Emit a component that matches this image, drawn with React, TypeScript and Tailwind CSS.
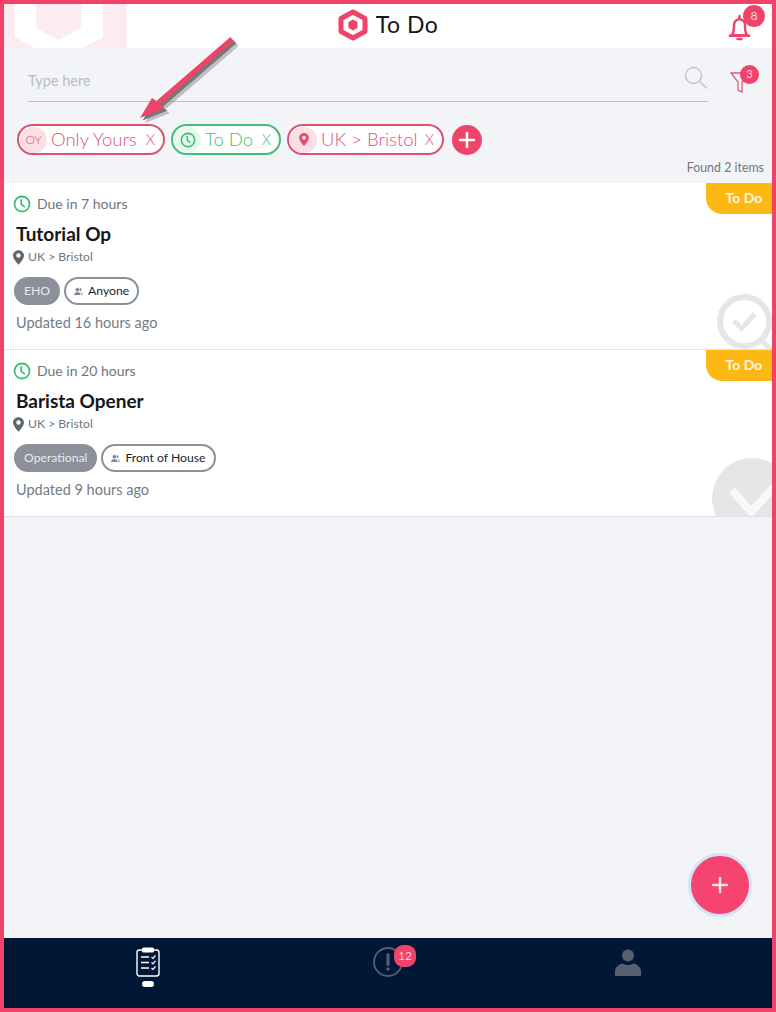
import { Plus, Users } from "lucide-react";

const font = { fontFamily: "Lato, 'Noto Sans', sans-serif" };

function Clock({ className }: { className: string }) {
  return (
    <svg viewBox="0 0 24 24" fill="none" stroke="currentColor" strokeWidth="2.4" strokeLinecap="round" strokeLinejoin="round" className={className}>
      <circle cx="12" cy="12" r="10" />
      <path d="M11 6.5v6l4 3" />
    </svg>
  );
}

function Pin({ className }: { className: string }) {
  return (
    <svg viewBox="0 0 24 32" className={className}>
      <path fill="currentColor" fillRule="evenodd" d="M12 0C5.4 0 0 5.3 0 11.8 0 20 12 32 12 32s12-12 12-20.2C24 5.3 18.6 0 12 0zm0 16.5a4.8 4.8 0 1 1 0-9.6 4.8 4.8 0 0 1 0 9.6z" />
    </svg>
  );
}

function Chip({ color, tint, icon, label, width }: { color: string; tint: string; icon: React.ReactNode; label: string; width: string }) {
  return (
    <div className={`flex h-[31px] items-center rounded-full border-2 bg-white ${color} ${width}`}>
      <span className={`ml-[1px] flex h-[26px] w-[27px] shrink-0 items-center justify-center rounded-full ${tint}`}>{icon}</span>
      <span className="ml-[4px] text-[18.5px] font-light whitespace-nowrap">{label}</span>
      <span className="mr-[8px] ml-auto text-[15px] font-light">X</span>
    </div>
  );
}

function Card({ due, title, tag, who, updated, mark }: { due: string; title: string; tag: string; who: string; updated: string; mark: React.ReactNode }) {
  return (
    <div className="relative h-[167px] shrink-0 overflow-hidden border-b border-[#e2e3e6] bg-white pt-[12px] pl-[10px]">
      <div className="absolute top-0 right-0 flex h-[31px] w-[66px] items-center justify-center rounded-bl-[16px] bg-[#fdb813] pb-[3px] pl-[10px] text-[14px] font-bold text-[#fff6e0]">
        To Do
      </div>
      {mark}
      <div className="flex h-[17px] items-center">
        <Clock className="ml-[-1px] h-[18px] w-[18px] text-[#3dbf75]" />
        <span className="ml-[6px] text-[14px] text-[#6f757e]">{due}</span>
      </div>
      <div className="mt-[10px] ml-[2px] h-[24px] text-[19px] leading-[24px] font-bold text-[#15161a]">{title}</div>
      <div className="mt-[3px] flex h-[16px] items-center">
        <Pin className="ml-[-1px] h-[15px] w-[11px] text-[#5e6670]" />
        <span className="ml-[4px] text-[12.2px] text-[#70767f]">UK &gt; Bristol</span>
      </div>
      <div className="mt-[12px] flex h-[28px] gap-[4px]">
        <span className="flex items-center rounded-full bg-[#8b909b] px-[10px] text-[12.2px] text-[#e8e9ec]">{tag}</span>
        <span className="flex items-center rounded-full border-2 border-[#8b909b] px-[8px] text-[12.2px] text-[#1d1f24]">
          <Users className="mr-[5px] h-[9px] w-[9px] text-[#7d838d]" fill="currentColor" />
          {who}
        </span>
      </div>
      <div className="mt-[7px] ml-[2px] text-[14.5px] text-[#747a83]">{updated}</div>
    </div>
  );
}

export default function App() {
  return (
    <div style={font} className="relative flex h-[1012px] w-[776px] flex-col overflow-hidden border-4 border-[#ef4369] bg-[#f2f4f8]">
      {/* header */}
      <header className="relative flex h-[44px] shrink-0 items-center justify-center bg-white pb-[3px]">
        <svg viewBox="0 0 123 44" className="absolute top-0 left-0 h-[44px] w-[123px]">
          <rect width="123" height="44" fill="#fdecef" />
          <path d="M11 0h88v33l-20 11H31L11 33z" fill="#ffffff" />
          <path d="M32 0h45v24L55 36 32 24z" fill="#fdecef" />
        </svg>
        <svg viewBox="0 0 30 32" className="mr-[8px] h-[32px] w-[30px]">
          <path d="M15 3 27 9.5v13L15 29 3 22.5v-13z" fill="#fff" stroke="#ef4369" strokeWidth="5" strokeLinejoin="round" />
          <path d="M15 10.5l4.600 2.600v5.600L15 21.400l-4.600-2.700v-5.600z" fill="#ef4369" />
        </svg>
        <span className="text-[23px] tracking-[0.5px] text-[#15161a]">To Do</span>
        <div className="absolute top-0 right-[10px] h-[44px] w-[36px]">
          <svg viewBox="0 0 24 28" fill="none" stroke="#ef4369" strokeWidth="2.6" strokeLinecap="round" strokeLinejoin="round" className="absolute top-[10px] left-[2px] h-[27px] w-[23px]">
            <path d="M4 22c1.800-2 2.300-5 2.300-11a5.700 5.700 0 0 1 11.400 0c0 6 .5 9 2.300 11zM2 22.500h20" />
            <path d="M12 2v2M10 26h4" />
          </svg>
          <span className="absolute top-[1px] right-[-3px] flex h-[22px] w-[22px] items-center justify-center rounded-full bg-[#ef4369] text-[12px] text-[#fbd5dd]">8</span>
        </div>
      </header>

      {/* search */}
      <div className="relative flex shrink-0 items-start pt-[20px] pl-[24px]">
        <div className="flex h-[34px] w-[680px] items-center justify-between border-b border-[#b4bfca] pb-[7px]">
          <span className="text-[14.5px] text-[#b9bcc2]">Type here</span>
          <svg viewBox="0 0 24 24" fill="none" stroke="#bcc3c9" strokeWidth="1.3" className="mb-[7px] h-[24px] w-[24px]">
            <circle cx="9.500" cy="9.500" r="8" />
            <path d="M15.500 15.500 23 22.500" />
          </svg>
        </div>
        <div className="relative ml-[22px] h-[34px] w-[32px]">
          <svg viewBox="0 0 20 22" fill="none" stroke="#e2577a" strokeWidth="1.3" className="absolute top-[3px] left-0 h-[22px] w-[20px]">
            <path d="M1 2h18l-7 9v10l-4-2v-8z" />
          </svg>
          <span className="absolute top-[-3px] left-[10px] flex h-[19px] w-[19px] items-center justify-center rounded-full bg-[#ef4369] text-[11px] text-[#fbd5dd]">3</span>
        </div>
      </div>

      {/* active filters */}
      <div className="mt-[22px] flex shrink-0 items-center gap-[6px] pl-[13px]">
        <Chip color="border-[#dc5273] text-[#dc5273]" tint="bg-[#fbdfe5]" icon={<span className="text-[12px] font-light">OY</span>} label="Only Yours" width="w-[148px]" />
        <Chip color="border-[#3dbf75] text-[#3dbf75]" tint="bg-[#e9f7ef]" icon={<Clock className="h-[16px] w-[16px]" />} label="To Do" width="w-[110px]" />
        <Chip color="border-[#dc5273] text-[#dc5273]" tint="bg-[#fbdfe5]" icon={<Pin className="h-[13px] w-[10px]" />} label="UK > Bristol" width="w-[157px]" />
        <span className="ml-[2px] flex h-[30px] w-[30px] items-center justify-center rounded-full bg-[#ef4369]">
          <Plus className="h-[24px] w-[24px] text-white" strokeWidth={2.5} />
        </span>
      </div>

      <div className="mt-[4px] h-[24px] shrink-0 pr-[8px] text-right text-[12.4px] leading-[18px] text-[#70767f]">Found 2 items</div>

      {/* list */}
      <Card
        due="Due in 7 hours"
        title="Tutorial Op"
        tag="EHO"
        who="Anyone"
        updated="Updated 16 hours ago"
        mark={
          <svg viewBox="0 0 60 60" className="absolute top-[111px] right-[-5px] h-[60px] w-[60px]">
            <circle cx="27.500" cy="27.500" r="24.500" fill="none" stroke="#e5e6e8" strokeWidth="6" />
            <path d="M17 27l7.500 7.500L38 20" fill="none" stroke="#e5e6e8" strokeWidth="5" />
            <path d="M46 48l10 10" fill="none" stroke="#e5e6e8" strokeWidth="5" />
          </svg>
        }
      />
      <Card
        due="Due in 20 hours"
        title="Barista Opener"
        tag="Operational"
        who="Front of House"
        updated="Updated 9 hours ago"
        mark={
          <svg viewBox="0 0 80 80" className="absolute top-[108px] right-[-20px] h-[80px] w-[80px]">
            <circle cx="40" cy="40" r="40" fill="#e5e6e8" />
            <path d="M20 32l19 22 39-42" fill="none" stroke="#f8f8f9" strokeWidth="8" />
          </svg>
        }
      />

      <div className="flex-1" />

      {/* bottom nav */}
      <nav className="h-[70px] shrink-0 bg-[#001736]">
        <div className="mx-auto grid w-[720px] grid-cols-3">
          <div className="flex flex-col items-center pt-[9px]">
            <svg viewBox="0 0 24 30" fill="none" className="h-[30px] w-[24px]">
              <rect x="1" y="3" width="22" height="26" rx="2.500" stroke="#fff" strokeWidth="1.4" />
              <rect x="6" y="0.500" width="12" height="5" rx="1.500" fill="#fff" />
              <path d="M5 10h8M5 15.500h8M5 21h8" stroke="#fff" strokeWidth="1.500" />
              <path d="M15.500 10l1.500 1.400 2.500-3M15.500 15.500l1.500 1.400 2.500-3M15.500 21l1.500 1.400 2.500-3" stroke="#fff" strokeWidth="1.300" />
            </svg>
            <span className="mt-[4px] h-[6px] w-[12px] rounded-full bg-white" />
          </div>
          <div className="flex justify-center pt-[8px]">
            <div className="relative h-[32px] w-[30px]">
              <svg viewBox="0 0 30 32" fill="none" className="h-[32px] w-[30px]">
                <circle cx="15" cy="16" r="14" stroke="#56606f" strokeWidth="1.800" />
                <path d="M15 8.500v10" stroke="#56606f" strokeWidth="3" strokeLinecap="round" />
                <circle cx="15" cy="23" r="1.800" fill="#56606f" />
              </svg>
              <span className="absolute top-[-1px] left-[21px] flex h-[22px] w-[22px] items-center justify-center rounded-[9px] bg-[#ef4369] text-[12px] text-[#fbd5dd]">12</span>
            </div>
          </div>
          <div className="flex justify-center pt-[11px]">
            <svg viewBox="0 0 26 27" fill="#56606f" className="h-[27px] w-[26px]">
              <circle cx="13" cy="6.500" r="6" />
              <path d="M0 27v-5c0-4 4.500-7 8-7.500 1.500 1 3 1.500 5 1.500s3.500-.5 5-1.500c3.500.5 8 3.500 8 7.500v5z" />
            </svg>
          </div>
        </div>
      </nav>

      {/* add button */}
      <button className="absolute top-[849px] left-[684px] flex h-[64px] w-[64px] items-center justify-center rounded-full border-[3px] border-[#d5e3f8] bg-[#f5446f]">
        <Plus className="h-[24px] w-[24px] text-[#fbe3e8]" strokeWidth={2.5} />
      </button>

      {/* tutorial arrow */}
      <svg viewBox="0 0 110 100" className="absolute top-[32px] left-[130px] h-[100px] w-[110px]">
        <path d="M6 82 18 62l4.400 3.100L96.400 1.100l3.200 3.800-74 64L31 72z" fill="#8a8a8a" opacity="0.5" transform="translate(5 5)" />
        <path d="M6 82 18 62l4.400 3.100L96.400 1.100l3.200 3.800-74 64L31 72z" fill="#777" transform="translate(2.500 2.500)" />
        <path d="M6 82 18 62l4.400 3.100L96.400 1.100l3.200 3.800-74 64L31 72z" fill="#ef4369" />
      </svg>
    </div>
  );
}
